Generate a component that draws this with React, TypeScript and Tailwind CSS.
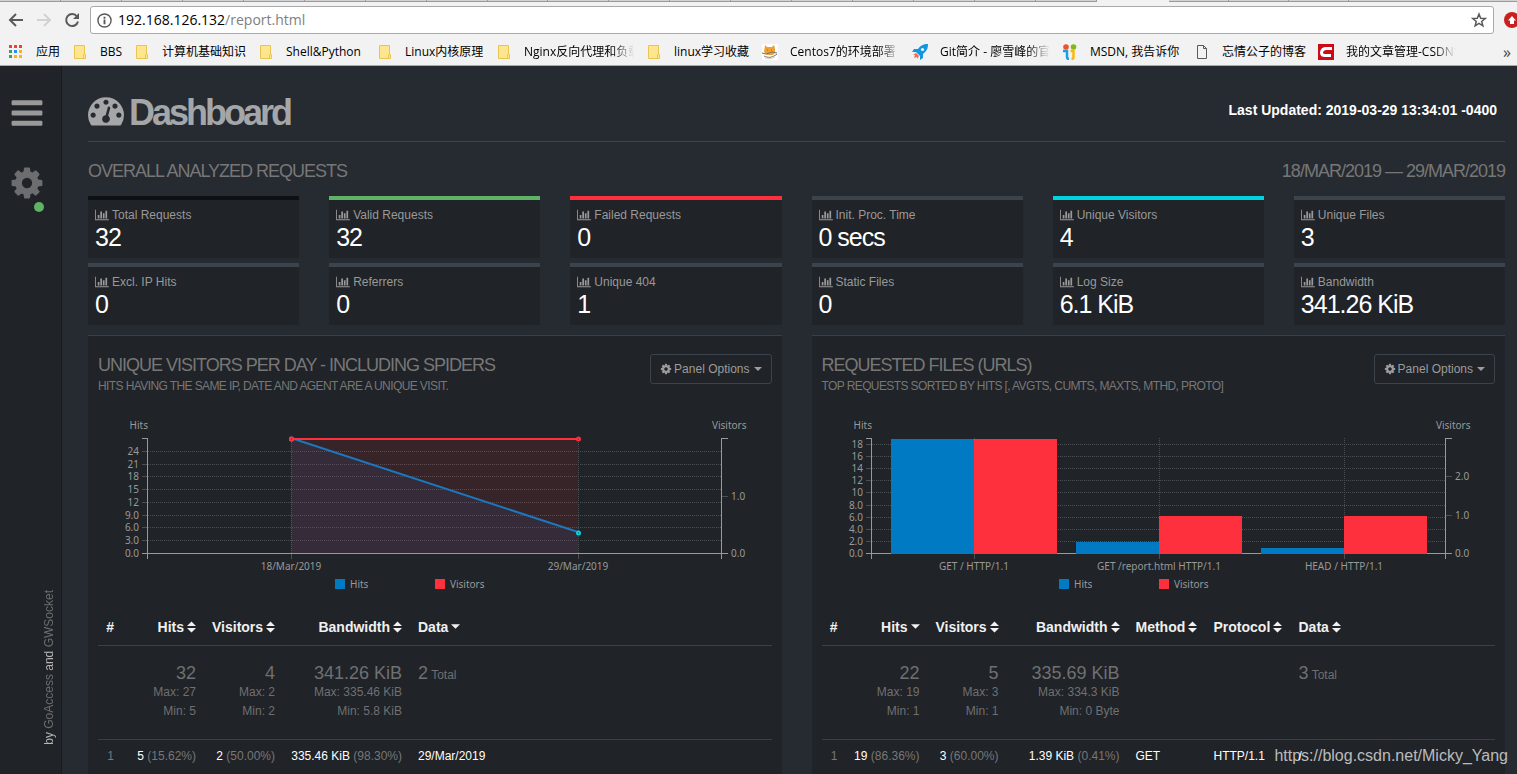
import { useLayoutEffect, useRef, useState } from "react";
import type { ReactNode } from "react";

const COG =
  "M1152 896q0-106-75-181t-181-75-181 75-75 181 75 181 181 75 181-75 75-181zm512-109v222q0 12-8 23t-20 13l-185 28q-19 54-39 91 35 50 107 138 10 12 10 25t-9 23q-27 37-99 108t-94 71q-12 0-26-9l-138-108q-44 23-91 38-16 136-29 186-7 28-36 28h-222q-14 0-24.5-8.5t-11.5-21.5l-28-184q-49-16-90-37l-141 107q-10 9-25 9-14 0-25-11-126-114-165-168-7-10-7-23 0-12 8-23 15-21 51-66.5t54-70.5q-27-50-41-99l-183-27q-13-2-21-12.5t-8-23.5v-222q0-12 8-23t19-13l186-28q14-46 39-92-40-57-107-138-10-12-10-24 0-10 9-23 26-36 98.5-107.5t94.5-71.5q13 0 26 10l138 107q44-23 91-38 16-136 29-186 7-28 36-28h222q14 0 24.5 8.5t11.5 21.5l28 184q49 16 90 37l142-107q9-9 24-9 13 0 25 10 129 119 165 170 7 8 7 22 0 12-8 23-15 21-51 66.5t-54 70.5q26 50 41 98l183 28q13 2 21 12.5t8 23.5z";
const BARS =
  "M1664 1344v128q0 26-19 45t-45 19h-1408q-26 0-45-19t-19-45v-128q0-26 19-45t45-19h1408q26 0 45 19t19 45zm0-512v128q0 26-19 45t-45 19h-1408q-26 0-45-19t-19-45v-128q0-26 19-45t45-19h1408q26 0 45 19t19 45zm0-512v128q0 26-19 45t-45 19h-1408q-26 0-45-19t-19-45v-128q0-26 19-45t45-19h1408q26 0 45 19t19 45z";
const GAUGE =
  "M384 1152q0-53-37.5-90.5t-90.5-37.5-90.5 37.5-37.5 90.5 37.5 90.5 90.5 37.5 90.5-37.5 37.5-90.5zm192-448q0-53-37.5-90.5t-90.5-37.5-90.5 37.5-37.5 90.5 37.5 90.5 90.5 37.5 90.5-37.5 37.5-90.5zm428 481l101-382q6-26-7.5-48.5t-38.5-29.5-48 6.5-30 39.5l-101 382q-60 5-107 43.5t-63 98.5q-20 77 20 146t117 89 146-20 89-117q16-60-6-117t-72-91zm660-33q0-53-37.5-90.5t-90.5-37.5-90.5 37.5-37.5 90.5 37.5 90.5 90.5 37.5 90.5-37.5 37.5-90.5zm-640-640q0-53-37.5-90.5t-90.5-37.5-90.5 37.5-37.5 90.5 37.5 90.5 90.5 37.5 90.5-37.5 37.5-90.5zm448 192q0-53-37.5-90.5t-90.5-37.5-90.5 37.5-37.5 90.5 37.5 90.5 90.5 37.5 90.5-37.5 37.5-90.5zm320 448q0 261-141 483-19 29-54 29h-1402q-35 0-54-29-141-221-141-483 0-182 71-348t191-286 286-191 348-71 348 71 286 191 191 286 71 348z";
const BAR_CHART =
  "M640 896v512h-256v-512h256zm384-512v1024h-256v-1024h256zm1024 1152v128h-2048v-1536h128v1408h1920zm-640-896v768h-256v-768h256zm384-384v1152h-256v-1152h256z";

/* Browser chrome */

function AppsIcon() {
  const colors = ["#ea4335", "#ea4335", "#ea4335", "#34a261", "#2a8bf2", "#fbb40c", "#34a261", "#fbb40c", "#fbb40c"];
  return (
    <svg viewBox="0 0 16 16" className="h-4 w-4">
      {colors.map((fill, i) => (
        <rect key={i} x={1 + (i % 3) * 5} y={1 + Math.floor(i / 3) * 5} width="3" height="3" fill={fill} />
      ))}
    </svg>
  );
}

function FolderIcon() {
  return (
    <svg viewBox="0 0 16 16" className="h-4 w-4">
      <path d="M2.500 1.500h10v9h1v4h-11z" fill="#ffe590" stroke="#e8c64d" />
      <path d="M11.500 14v-3.500" stroke="#e8c64d" />
    </svg>
  );
}

function CatIcon() {
  return (
    <svg viewBox="0 0 16 16" className="h-4 w-4">
      <path d="M0 0h16v16H0z" fill="#fff" />
      <path d="M3 1l2 2h5l2-2 1 3v5l-2 2H5L2 8z" fill="#f0a132" />
      <path d="M0 9l4 1 6-2 5 1M2 12c4 2 8 2 13-2M5 6h1m3 0h1" stroke="#77746a" fill="none" />
      <path d="M3 14c3 1 7 1 10-1" stroke="#d2d2cc" fill="none" />
    </svg>
  );
}

function RocketIcon() {
  return (
    <svg viewBox="0 0 16 16" className="h-4 w-4">
      <path d="M16 0C11 0 8 2 6 5L2 5 0 8l4 0 4 4v4l3-2 0-4c4-3 5-6 5-10z" fill="#1296e0" />
      <circle cx="10.500" cy="5.500" r="1.600" fill="#f2f2f2" />
      <path d="M4 9l-3 2 2 0-1 3 3-1 0 2 2-3z" fill="#ee6a55" />
    </svg>
  );
}

function MsdnIcon() {
  return (
    <svg viewBox="0 0 16 16" className="h-4 w-4">
      <circle cx="4" cy="3" r="2.800" fill="#f0512a" />
      <circle cx="11.500" cy="3" r="2.800" fill="#7fba1c" />
      <path d="M1 7h4v6q0 2 2 2" fill="none" stroke="#1ba0e0" strokeWidth="2.500" />
      <path d="M8.500 7h3v6q0 2-2 2" fill="none" stroke="#fbb60f" strokeWidth="2.500" />
    </svg>
  );
}

function PageIcon() {
  return (
    <svg viewBox="0 0 16 16" className="h-4 w-4" fill="none" stroke="#5a5a5a">
      <path d="M3.500 1.500h6l3 3v10h-9zM9.500 1.500v3h3" />
    </svg>
  );
}

function CsdnIcon() {
  return (
    <svg viewBox="0 0 16 16" className="h-4 w-4">
      <path d="M0 0h16v16H0z" fill="#ca0c16" />
      <path d="M14 4.500H8.500Q4 4.500 3.500 8.500q0 3 3.500 3h6" fill="none" stroke="#fff" strokeWidth="3" />
    </svg>
  );
}

const bookmarks: { label: string; width: string; icon: ReactNode; fade?: boolean }[] = [
  { label: "应用", width: "w-[24px]", icon: <AppsIcon /> },
  { label: "BBS", width: "w-[22px]", icon: <FolderIcon /> },
  { label: "计算机基础知识", width: "w-[84px]", icon: <FolderIcon /> },
  { label: "Shell&Python", width: "w-[79px]", icon: <FolderIcon /> },
  { label: "Linux内核原理", width: "w-[79px]", icon: <FolderIcon /> },
  { label: "Nginx反向代理和负载均衡", width: "w-[110px]", icon: <FolderIcon />, fade: true },
  { label: "linux学习收藏", width: "w-[76px]", icon: <FolderIcon /> },
  { label: "Centos7的环境部署", width: "w-[110px]", icon: <CatIcon />, fade: true },
  { label: "Git简介 - 廖雪峰的官方网站", width: "w-[110px]", icon: <RocketIcon />, fade: true },
  { label: "MSDN, 我告诉你", width: "w-[92px]", icon: <MsdnIcon /> },
  { label: "忘情公子的博客", width: "w-[84px]", icon: <PageIcon /> },
  { label: "我的文章管理-CSDN博客", width: "w-[110px]", icon: <CsdnIcon />, fade: true },
];

function BrowserBar() {
  return (
    <header className="border-b border-[#a9a9a9] bg-[#f2f2f2] font-['Open_Sans','Noto_Sans_CJK_SC',sans-serif] text-black">
      <div className="flex h-0.5">
        <div className="flex w-[1097px] shrink border-b border-[#9a9a9a] bg-[#d2d2d2]">
          {Array.from({ length: 18 }, (_, i) => (
            <div key={i} className="flex-1 border-r border-[#9a9a9a]" />
          ))}
        </div>
        <div className="w-[72px]" />
        <div className="flex flex-1 border-b border-[#9a9a9a] bg-[#d2d2d2]">
          {Array.from({ length: 3 }, (_, i) => (
            <div key={i} className="w-[60px] border-r border-[#9a9a9a]" />
          ))}
        </div>
      </div>
      <div className="flex h-8 items-end overflow-hidden pl-2">
        <div className="flex h-7 items-center gap-3 pr-[10px]">
          <button aria-label="Back">
            <svg viewBox="0 0 16 16" className="h-4 w-4" fill="none" stroke="#5a5a5a" strokeWidth="2">
              <path d="M15 8H2.500M8 2L2 8l6 6" />
            </svg>
          </button>
          <button aria-label="Forward">
            <svg viewBox="0 0 16 16" className="h-4 w-4" fill="none" stroke="#d2d2d2" strokeWidth="2">
              <path d="M1 8h12.500M8 2l6 6-6 6" />
            </svg>
          </button>
          <button aria-label="Reload">
            <svg viewBox="0 0 16 16" className="h-4 w-4" fill="none" stroke="#5a5a5a" strokeWidth="2">
              <path d="M13 4.500A6 6 0 1 0 14 9.500" />
              <path d="M15 1v6H9z" fill="#5a5a5a" stroke="none" />
            </svg>
          </button>
        </div>
        <div className="flex h-7 flex-1 items-center gap-1.5 rounded-[3px] border border-[#a9a9a9] bg-white px-1.5">
          <svg viewBox="0 0 16 16" className="h-[15px] w-[15px]" fill="none" stroke="#5a5a5a" strokeWidth="1.500">
            <circle cx="8" cy="8" r="7" />
            <path d="M8 7v5M8 4v2" strokeWidth="2" />
          </svg>
          <div className="text-sm leading-5">
            192.168.126.132<span className="text-[#808080]">/report.html</span>
          </div>
          <button aria-label="Bookmark this page" className="ml-auto">
            <svg viewBox="0 0 16 16" className="h-4 w-4" fill="none" stroke="#5a5a5a" strokeWidth="1.500">
              <path d="M8 2l1.700 4.200 4.500.3-3.500 2.900 1.200 4.400L8 11.400l-3.900 2.400 1.200-4.400L1.800 6.500l4.500-.3z" />
            </svg>
          </button>
        </div>
        <div className="-mr-4 ml-[10px] flex h-7 w-[29px] items-center">
          <svg viewBox="0 0 16 16" className="h-4 w-4 shrink-0">
            <circle cx="8" cy="8" r="8" fill="#c8201f" />
            <path d="M8 4l4 4.500h-2V12H6V8.500H4z" fill="#fff" />
          </svg>
        </div>
      </div>
      <nav className="flex h-[31px] items-center gap-3 overflow-hidden pl-2 pr-1 pt-1 text-xs">
        {bookmarks.map((item) => (
          <a key={item.label} href="#" className="flex shrink-0 items-center gap-3">
            {item.icon}
            <span
              className={`${item.width} overflow-hidden whitespace-nowrap leading-5 ${
                item.fade ? "[mask-image:linear-gradient(to_right,#000_80%,transparent)]" : ""
              }`}
            >
              {item.label}
            </span>
          </a>
        ))}
        <button aria-label="More bookmarks" className="ml-auto mr-0.5 text-base leading-4 text-[#444]">
          »
        </button>
      </nav>
    </header>
  );
}

/* Report */

const stats = [
  { label: "Total Requests", value: "32", border: "border-[#0e1114]" },
  { label: "Valid Requests", value: "32", border: "border-[#5fb365]" },
  { label: "Failed Requests", value: "0", border: "border-[#ff303e]" },
  { label: "Init. Proc. Time", value: "0 secs", border: "border-[#3b444c]" },
  { label: "Unique Visitors", value: "4", border: "border-[#00d4e1]" },
  { label: "Unique Files", value: "3", border: "border-[#3b444c]" },
  { label: "Excl. IP Hits", value: "0", border: "border-[#3b444c]" },
  { label: "Referrers", value: "0", border: "border-[#3b444c]" },
  { label: "Unique 404", value: "1", border: "border-[#3b444c]" },
  { label: "Static Files", value: "0", border: "border-[#3b444c]" },
  { label: "Log Size", value: "6.1 KiB", border: "border-[#3b444c]" },
  { label: "Bandwidth", value: "341.26 KiB", border: "border-[#3b444c]" },
];

interface ChartData {
  kind: "area" | "bar";
  labels: string[];
  hits: number[];
  visitors: number[];
  maxHits: number;
  maxVisitors: number;
  hitTicks: number[];
  visitorTicks: number[];
}

const MARGIN_LEFT = 50;
const MARGIN_RIGHT = 49;
const TOP = 28;
const BOTTOM = 143;

function formatTick(value: number) {
  return value < 10 ? value.toFixed(1) : String(value);
}

function Chart({ data }: { data: ChartData }) {
  const box = useRef<HTMLDivElement>(null);
  const [width, setWidth] = useState(673);

  useLayoutEffect(() => {
    if (!box.current) return;
    const measure = () => box.current && setWidth(Math.floor(box.current.getBoundingClientRect().width));
    measure();
    const observer = new ResizeObserver(measure);
    observer.observe(box.current);
    return () => observer.disconnect();
  }, []);

  const left = MARGIN_LEFT;
  const right = width - MARGIN_RIGHT;
  const inner = right - left;
  const middle = Math.round(width / 2);
  const count = data.labels.length;
  const step = data.kind === "bar" ? Math.floor(inner / (count + 0.1)) : inner / count;
  const start = data.kind === "bar" ? left + Math.round((inner - (count - 0.1) * step) / 2) : left;
  const half = data.kind === "bar" ? Math.round((step * 0.9) / 2) : step / 2;
  const center = (i: number) => Math.floor(start + i * step + half);
  const yHits = (v: number) => Math.round(BOTTOM - (v / data.maxHits) * (BOTTOM - TOP));
  const yVisitors = (v: number) => Math.round(BOTTOM - (v / data.maxVisitors) * (BOTTOM - TOP));
  const line = (values: number[], y: (v: number) => number) =>
    values.map((v, i) => `${center(i)},${y(v)}`).join(" ");
  const area = (values: number[], y: (v: number) => number) =>
    `${center(0)},${BOTTOM} ${line(values, y)} ${center(count - 1)},${BOTTOM}`;

  return (
    <div ref={box} className="h-[195px] w-full overflow-hidden">
      <svg
        width={width}
        height="195"
        className="block fill-[#999] font-['Noto_Sans',sans-serif] text-[10px]"
      >
        <text x={left} y="19" textAnchor="end">Hits</text>
        <text x={right - 10} y="19">Visitors</text>

        <g shapeRendering="crispEdges" stroke="#4a4f54" strokeDasharray="1 1">
          {data.hitTicks.slice(1).map((v) => (
            <line key={v} x1={left} x2={right} y1={yHits(v) + 0.5} y2={yHits(v) + 0.5} />
          ))}
          {data.labels.map((label, i) => (
            <line key={label} x1={center(i) + 0.5} x2={center(i) + 0.5} y1={TOP} y2={BOTTOM} />
          ))}
        </g>
        <g shapeRendering="crispEdges" stroke="#4a4f54">
          {data.hitTicks.map((v) => (
            <line key={v} x1={left - 6} x2={left} y1={yHits(v) + 0.5} y2={yHits(v) + 0.5} />
          ))}
          {data.visitorTicks.map((v) => (
            <line key={v} x1={right} x2={right + 6} y1={yVisitors(v) + 0.5} y2={yVisitors(v) + 0.5} />
          ))}
          {data.labels.map((label, i) => (
            <line key={label} x1={center(i) + 0.5} x2={center(i) + 0.5} y1={BOTTOM} y2={BOTTOM + 6} />
          ))}
        </g>
        <path
          d={`M${left - 6} ${TOP + 0.5}H${left - 0.5}V${BOTTOM + 6}M${right + 6} ${TOP + 0.5}H${right - 0.5}V${BOTTOM + 6}M${left - 6} ${BOTTOM + 0.5}H${right + 6}`}
          fill="none"
          stroke="#999"
          shapeRendering="crispEdges"
        />

        {data.kind === "area" ? (
          <>
            <polygon points={area(data.visitors, yVisitors)} fill="#ff303e" fillOpacity="0.1" />
            <polygon points={area(data.hits, yHits)} fill="#2f70d0" fillOpacity="0.1" />
            <polyline points={line(data.hits, yHits)} fill="none" stroke="#1c77bd" strokeWidth="2" />
            <polyline points={line(data.visitors, (v) => yVisitors(v) + 1)} fill="none" stroke="#ff303e" strokeWidth="2" />
            {data.labels.map((label, i) => (
              <g key={label} fill="#202327" strokeWidth="2">
                <circle cx={center(i) + 0.5} cy={yHits(data.hits[i]) + 1} r="1.500" stroke="#00d4e1" />
                <circle cx={center(i) + 0.5} cy={yVisitors(data.visitors[i]) + 1} r="1.500" stroke="#ff303e" />
              </g>
            ))}
          </>
        ) : (
          <g shapeRendering="crispEdges">
            {data.labels.map((label, i) => (
              <g key={label}>
                <rect x={center(i) - half} y={yHits(data.hits[i]) + 1} width={half} height={BOTTOM - yHits(data.hits[i])} fill="#007bc3" />
                <rect x={center(i)} y={yVisitors(data.visitors[i]) + 1} width={half} height={BOTTOM - yVisitors(data.visitors[i])} fill="#ff303e" />
              </g>
            ))}
          </g>
        )}

        {data.hitTicks.map((v) => (
          <text key={v} x={left - 9} y={yHits(v) + 4} textAnchor="end">{formatTick(v)}</text>
        ))}
        {data.visitorTicks.map((v) => (
          <text key={v} x={right + 9} y={yVisitors(v) + 4}>{formatTick(v)}</text>
        ))}
        {data.labels.map((label, i) => (
          <text key={label} x={center(i)} y="160" textAnchor="middle">{label}</text>
        ))}

        <rect x={middle - 100} y="169" width="10" height="10" fill="#007bc3" />
        <text x={middle - 85} y="178">Hits</text>
        <rect x={middle} y="169" width="10" height="10" fill="#ff303e" />
        <text x={middle + 15} y="178">Visitors</text>
      </svg>
    </div>
  );
}

function Sort({ active }: { active?: boolean }) {
  return (
    <svg viewBox="0 0 10 12" className="ml-[3px] inline-block h-3 w-[9px] align-[-1px]" fill="currentColor">
      {active ? <path d="M0 3h10L5 8z" /> : <path d="M5 0l5 5H0zM0 7h10l-5 5z" />}
    </svg>
  );
}

interface Column {
  title: string;
  width: string;
  right?: boolean;
  active?: boolean;
  total?: string;
  suffix?: string;
  max?: string;
  min?: string;
  value: string;
  percent?: string;
}

interface PanelData {
  title: string;
  subtitle: string;
  chart: ChartData;
  columns: Column[];
}

const panels: PanelData[] = [
  {
    title: "Unique visitors per day - Including spiders",
    subtitle: "Hits having the same IP, date and agent are a unique visit.",
    chart: {
      kind: "area",
      labels: ["18/Mar/2019", "29/Mar/2019"],
      hits: [27, 5],
      visitors: [2, 2],
      maxHits: 27,
      maxVisitors: 2,
      hitTicks: [0, 3, 6, 9, 12, 15, 18, 21, 24],
      visitorTicks: [0, 1],
    },
    columns: [
      { title: "Hits", width: "w-[82px]", right: true, total: "32", max: "27", min: "5", value: "5", percent: "15.62%" },
      { title: "Visitors", width: "w-[79px]", right: true, total: "4", max: "2", min: "2", value: "2", percent: "50.00%" },
      { title: "Bandwidth", width: "w-[127px]", right: true, total: "341.26 KiB", max: "335.46 KiB", min: "5.8 KiB", value: "335.46 KiB", percent: "98.30%" },
      { title: "Data", width: "w-auto", active: true, total: "2", suffix: "Total", value: "29/Mar/2019" },
    ],
  },
  {
    title: "Requested files (URLs)",
    subtitle: "Top requests sorted by hits [, avgts, cumts, maxts, mthd, proto]",
    chart: {
      kind: "bar",
      labels: ["GET / HTTP/1.1", "GET /report.html HTTP/1.1", "HEAD / HTTP/1.1"],
      hits: [19, 2, 1],
      visitors: [3, 1, 1],
      maxHits: 19,
      maxVisitors: 3,
      hitTicks: [0, 2, 4, 6, 8, 10, 12, 14, 16, 18],
      visitorTicks: [0, 1, 2],
    },
    columns: [
      { title: "Hits", width: "w-[82px]", right: true, active: true, total: "22", max: "19", min: "1", value: "19", percent: "86.36%" },
      { title: "Visitors", width: "w-[79px]", right: true, total: "5", max: "3", min: "1", value: "3", percent: "60.00%" },
      { title: "Bandwidth", width: "w-[121px]", right: true, total: "335.69 KiB", max: "334.3 KiB", min: "0 Byte", value: "1.39 KiB", percent: "0.41%" },
      { title: "Method", width: "w-[78px]", value: "GET" },
      { title: "Protocol", width: "w-[85px]", value: "HTTP/1.1" },
      { title: "Data", width: "w-auto", total: "3", suffix: "Total", value: "/" },
    ],
  },
];

function Panel({ panel }: { panel: PanelData }) {
  return (
    <section className="min-w-0 overflow-hidden border-t border-[#3b4045] bg-[#202327] px-[10px] pt-[18px]">
      <div className="flex h-14 items-start justify-between">
        <div className="uppercase text-[#777]">
          <h3 className="text-lg leading-[22px] tracking-[-1px]">{panel.title}</h3>
          <p className="text-xs leading-5 tracking-tighter">{panel.subtitle}</p>
        </div>
        <button className="flex h-[30px] shrink-0 items-center rounded-[3px] border border-[#3b444c] px-[9px] text-xs text-[#9c9c9c]">
          <svg viewBox="0 0 1792 1792" className="mr-0.5 h-3 w-3" fill="currentColor">
            <path d={COG} />
          </svg>
          Panel Options
          <svg viewBox="0 0 8 4" className="ml-1 h-1 w-2" fill="currentColor">
            <path d="M0 0h8L4 4z" />
          </svg>
        </button>
      </div>
      <Chart data={panel.chart} />
      <table className="w-full table-fixed border-collapse whitespace-nowrap">
        <thead>
          <tr className="h-[40px] border-b border-[#3b4045] text-sm text-[#f0f0f0]">
            <th className="w-6 px-2 pt-1 text-right">#</th>
            {panel.columns.map((col) => (
              <th key={col.title} className={`${col.width} px-2 pt-1 ${col.right ? "text-right" : "text-left"}`}>
                {col.title}
                <Sort active={col.active} />
              </th>
            ))}
          </tr>
        </thead>
        <tbody>
          <tr className="h-[94px] border-b border-[#3b4045] align-top text-xs text-[#6f7072]">
            <td />
            {panel.columns.map((col) => (
              <td key={col.title} className={`px-2 pt-4 ${col.right ? "text-right" : "text-left"}`}>
                <div className="h-[21px] leading-[22px]">
                  <span className="text-lg leading-[22px]">{col.total}</span> {col.suffix}
                </div>
                {col.max && <div className="leading-[19px]">Max: {col.max}</div>}
                {col.min && <div className="leading-[19px]">Min: {col.min}</div>}
              </td>
            ))}
          </tr>
          <tr className="h-[34px] text-xs text-white">
            <td className="px-2 text-right text-[#777]">1</td>
            {panel.columns.map((col) => (
              <td key={col.title} className={`px-2 ${col.right ? "text-right" : "text-left"}`}>
                {col.value}
                {col.percent && <span className="text-[#777]"> ({col.percent})</span>}
              </td>
            ))}
          </tr>
        </tbody>
      </table>
    </section>
  );
}

function Sidebar() {
  return (
    <aside className="flex w-[62px] shrink-0 flex-col items-start border-r border-[#191c1f] bg-[#202327] pb-[29px] pl-[9px] pt-[29px]">
      <button aria-label="Menu" className="text-[#999]">
        <svg viewBox="0 0 1792 1792" className="h-9 w-9" fill="currentColor">
          <path d={BARS} />
        </svg>
      </button>
      <button aria-label="Settings" className="relative mt-[34px] text-[#6b6d70]">
        <svg viewBox="0 0 1792 1792" className="h-9 w-9" fill="currentColor">
          <path d={COG} />
        </svg>
        <span className="absolute -bottom-[11px] right-px h-[10px] w-[10px] rounded-full bg-[#5fb365]" />
      </button>
      <p className="ml-8 mt-auto rotate-180 text-xs leading-4 text-[#b5b5b5] [writing-mode:vertical-rl]">
        by <a href="#" className="text-[#6b6d70]">GoAccess</a> and <a href="#" className="text-[#6b6d70]">GWSocket</a>
      </p>
    </aside>
  );
}

export default function App() {
  return (
    <div className="relative flex min-h-screen flex-col overflow-hidden bg-[#262a31] font-['Liberation_Sans',Arial,sans-serif]">
      <BrowserBar />
      <div className="flex flex-1">
        <Sidebar />
        <main className="flex min-w-0 flex-1 flex-col pl-[26px] pr-3">
          <div className="flex h-[76px] items-center justify-between border-b border-[#3f4449] pt-4">
            <h1 className="flex items-center gap-[5px] pt-0.5 text-4xl font-bold tracking-[-3px] text-[#a4a6a8]">
              <svg viewBox="0 0 1792 1792" className="mb-1.5 h-9 w-9" fill="currentColor">
                <path d={GAUGE} />
              </svg>
              Dashboard
            </h1>
            <div className="pb-1 pr-2 text-sm font-bold text-white">Last Updated: 2019-03-29 13:34:01 -0400</div>
          </div>
          <div className="flex h-[54px] items-center justify-between pt-[3px] text-lg uppercase tracking-[-1px] text-[#777]">
            <h2>Overall Analyzed Requests</h2>
            <span>18/Mar/2019 — 29/Mar/2019</span>
          </div>
          <div className="grid grid-cols-6 gap-x-[30px] gap-y-[5px]">
            {stats.map((stat) => (
              <div key={stat.label} className={`h-[62px] border-t-4 bg-[#202327] px-[7px] pt-[7px] ${stat.border}`}>
                <div className="flex items-center gap-[3px] text-xs leading-4 text-[#999]">
                  <svg viewBox="0 0 2048 1792" className="h-3 w-[14px]" fill="currentColor">
                    <path d={BAR_CHART} />
                  </svg>
                  {stat.label}
                </div>
                <div className="text-[25px] leading-7 tracking-[-1px] text-white">{stat.value}</div>
              </div>
            ))}
          </div>
          <div className="mt-[10px] grid flex-1 grid-cols-2 gap-[30px]">
            {panels.map((panel) => (
              <Panel key={panel.title} panel={panel} />
            ))}
          </div>
        </main>
      </div>
      <div className="absolute bottom-1.5 right-[9px] text-base leading-6 text-white/70">
        https://blog.csdn.net/Micky_Yang
      </div>
    </div>
  );
}
